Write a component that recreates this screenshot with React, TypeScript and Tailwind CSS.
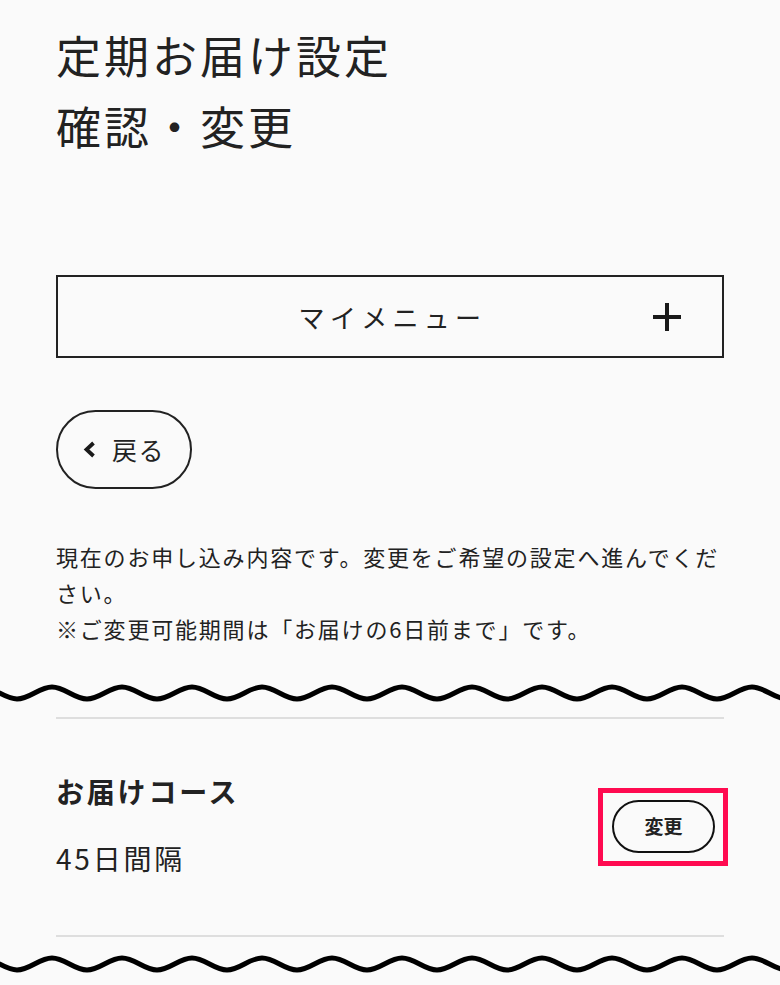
import React from 'react';

function Wave() {
  // sine-ish line, period 70px, peaks at x = 52 + 70k
  let d = 'M -18 6';
  for (let x = -18; x < 800; x += 70) {
    d += ` C ${x + 12.6} 6 ${x + 22.4} 18 ${x + 35} 18`;
    d += ` C ${x + 47.6} 18 ${x + 57.4} 6 ${x + 70} 6`;
  }
  return (
    <svg width="780" height="24" viewBox="0 0 780 24" className="block">
      <path d={d} fill="none" stroke="#000" strokeWidth="5" />
    </svg>
  );
}

export default function App() {
  return (
    <div className="min-h-screen bg-[#fafafa] text-[#222] font-['Noto_Sans_CJK_JP',sans-serif] overflow-hidden">
      <div className="px-[56px]">
        <h1 className="pt-[19px] text-[45px] leading-[71px] tracking-[3px] font-normal">
          定期お届け設定
          <br />
          確認・変更
        </h1>

        <button className="mt-[114px] w-full h-[83px] border-2 border-[#222] flex items-center justify-center relative bg-transparent">
          <span className="text-[26px] tracking-[5.3px] pl-[5px]">マイメニュー</span>
          <svg width="30" height="30" viewBox="0 0 30 30" className="absolute right-[40px] top-[25px]">
            <path d="M1 15 H29 M15 1 V29" stroke="#1a1a1a" strokeWidth="4" />
          </svg>
        </button>

        <button className="mt-[52px] w-[136px] h-[79px] rounded-full border-2 border-[#222] flex items-center pl-[25px] gap-[16px]">
          <svg width="13" height="17" viewBox="0 0 13 17">
            <polyline points="10.5,2 3.5,8.5 10.5,15" fill="none" stroke="#1a1a1a" strokeWidth="3.8" />
          </svg>
          <span className="text-[25px] leading-none tracking-[1.5px]">戻る</span>
        </button>

        <p className="mt-[49px] text-[22px] leading-[36px] tracking-[1.8px]">
          現在のお申し込み内容です。変更をご希望の設定へ進んでください。
          <br />
          ※ご変更可能期間は「お届けの6日前まで」です。
        </p>
      </div>

      <div className="mt-[35px]">
        <Wave />
      </div>

      <div className="px-[56px]">
        <div className="mt-[12px] border-t-2 border-[#dedede]" />
        <div className="h-[216px] flex items-center justify-between">
          <div className="-mt-[6px]">
            <p className="text-[28px] leading-[40px] font-bold tracking-[2.8px]">お届けコース</p>
            <p className="mt-[27px] text-[28px] leading-[40px] tracking-[2.8px]">45日間隔</p>
          </div>
          <div className="-mr-[4px] border-[5px] border-[#ff0a50] pl-[9px] pr-[8px] pt-[7px] pb-[8px]">
            <button className="w-[103px] h-[53px] rounded-full border-2 border-[#111] flex items-center justify-center text-[19px] font-bold">
              変更
            </button>
          </div>
        </div>
        <div className="border-t-2 border-[#dedede]" />
      </div>

      <div className="mt-[15px]">
        <Wave />
      </div>
    </div>
  );
}
